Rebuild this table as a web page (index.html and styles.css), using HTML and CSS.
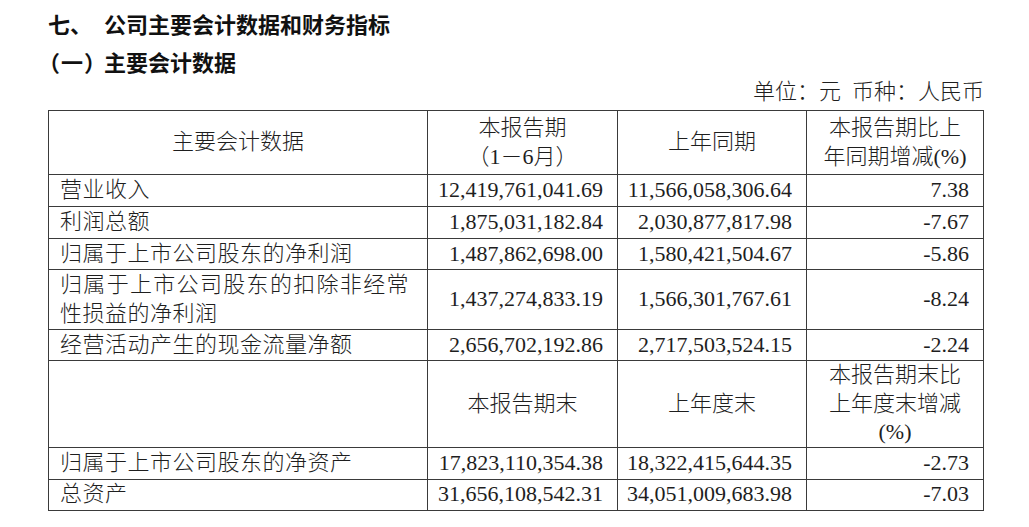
FILE: index.html
```html
<!DOCTYPE html>
<html lang="zh-CN">
<head>
<meta charset="utf-8">
<title>主要会计数据</title>
<link rel="stylesheet" href="styles.css">
</head>
<body>
<div class="page">
  <h1 class="heading"><span class="label">七、</span><span>公司主要会计数据和财务指标</span></h1>
  <h2 class="heading"><span class="label paren">（一）</span><span>主要会计数据</span></h2>
  <div class="unit">单位：元&nbsp;&nbsp;币种：人民币</div>
  <table class="data">
    <colgroup>
      <col class="c1"><col class="c2"><col class="c3"><col class="c4">
    </colgroup>
    <tr class="h64">
      <td class="center">主要会计数据</td>
      <td class="center">本报告期<br>（1－6月）</td>
      <td class="center">上年同期</td>
      <td class="center">本报告期比上<br>年同期增减(%)</td>
    </tr>
    <tr class="h32">
      <td class="name">营业收入</td>
      <td class="num">12,419,761,041.69</td>
      <td class="num">11,566,058,306.64</td>
      <td class="num">7.38</td>
    </tr>
    <tr class="h32">
      <td class="name">利润总额</td>
      <td class="num">1,875,031,182.84</td>
      <td class="num">2,030,877,817.98</td>
      <td class="num">-7.67</td>
    </tr>
    <tr class="h31">
      <td class="name">归属于上市公司股东的净利润</td>
      <td class="num">1,487,862,698.00</td>
      <td class="num">1,580,421,504.67</td>
      <td class="num">-5.86</td>
    </tr>
    <tr class="h60">
      <td class="name">归属于上市公司股东的扣除非经常性损益的净利润</td>
      <td class="num">1,437,274,833.19</td>
      <td class="num">1,566,301,767.61</td>
      <td class="num">-8.24</td>
    </tr>
    <tr class="h31">
      <td class="name">经营活动产生的现金流量净额</td>
      <td class="num">2,656,702,192.86</td>
      <td class="num">2,717,503,524.15</td>
      <td class="num">-2.24</td>
    </tr>
    <tr class="h85">
      <td class="name"></td>
      <td class="center">本报告期末</td>
      <td class="center">上年度末</td>
      <td class="center">本报告期末比<br>上年度末增减<br>(%)</td>
    </tr>
    <tr class="h32">
      <td class="name">归属于上市公司股东的净资产</td>
      <td class="num">17,823,110,354.38</td>
      <td class="num">18,322,415,644.35</td>
      <td class="num">-2.73</td>
    </tr>
    <tr class="h31">
      <td class="name">总资产</td>
      <td class="num">31,656,108,542.31</td>
      <td class="num">34,051,009,683.98</td>
      <td class="num">-7.03</td>
    </tr>
  </table>
</div>
</body>
</html>
```
FILE: styles.css
```css
html, body {
  margin: 0;
  padding: 0;
  background: #ffffff;
}

.page {
  padding: 4px 0 0 48px;
  width: 937px;
  color: #1e1e1e;
  font-family: "Liberation Serif", "Noto Sans CJK SC", serif;
}

.heading {
  display: flex;
  margin: 0;
  font-family: "Noto Sans CJK SC", sans-serif;
  font-size: 22px;
  font-weight: 700;
  line-height: 38px;
  color: #111111;
}

.label {
  width: 56px;
  flex: none;
}

.paren {
  font-feature-settings: "palt";
  letter-spacing: 2px;
}

.unit {
  text-align: right;
  font-size: 22px;
  line-height: 24px;
  font-weight: 300;
  padding-right: 1px;
}

.data {
  margin-top: 6px;
  border-collapse: collapse;
  table-layout: fixed;
  width: 936px;
  font-size: 22px;
  line-height: 28.5px;
  font-weight: 300;
}

.c1 { width: 379px; }
.c2 { width: 190px; }
.c3 { width: 189px; }
.c4 { width: 177px; }

.data td {
  border: 1px solid #3a3a3a;
  padding: 0 14px 0 12px;
  vertical-align: middle;
}

.data .name {
  text-align: justify;
  letter-spacing: 0.5px;
  padding-left: 11px;
  padding-right: 18px;
}

.data .num {
  text-align: right;
  white-space: nowrap;
  padding-left: 4px;
}

.data .center {
  text-align: center;
  padding-left: 4px;
  padding-right: 4px;
}

.h64 { height: 64px; }
.h32 { height: 32px; }
.h31 { height: 31px; }
.h60 { height: 60px; }
.h85 { height: 85px; }
```
